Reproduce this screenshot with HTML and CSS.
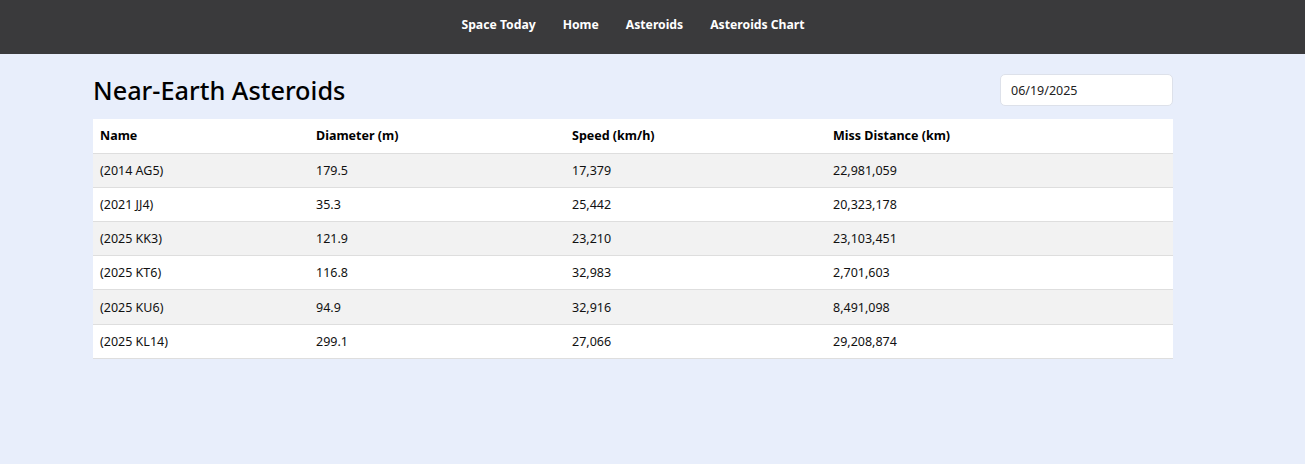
FILE: index.html
```html
<!DOCTYPE html>
<html>
<head>
<meta charset="utf-8">
<link rel="stylesheet" href="styles.css">
</head>
<body>
<nav class="topnav">
  <a href="#">Space Today</a>
  <a href="#">Home</a>
  <a href="#">Asteroids</a>
  <a href="#">Asteroids Chart</a>
</nav>
<main class="container">
  <div class="header">
    <h1>Near-Earth Asteroids</h1>
    <div class="date-input">06/19/2025</div>
  </div>
  <table class="ast-table">
    <thead>
      <tr><th class="c1">Name</th><th class="c2">Diameter (m)</th><th class="c3">Speed (km/h)</th><th class="c4">Miss Distance (km)</th></tr>
    </thead>
    <tbody>
      <tr><td>(2014 AG5)</td><td>179.5</td><td>17,379</td><td>22,981,059</td></tr>
      <tr><td>(2021 JJ4)</td><td>35.3</td><td>25,442</td><td>20,323,178</td></tr>
      <tr><td>(2025 KK3)</td><td>121.9</td><td>23,210</td><td>23,103,451</td></tr>
      <tr><td>(2025 KT6)</td><td>116.8</td><td>32,983</td><td>2,701,603</td></tr>
      <tr><td>(2025 KU6)</td><td>94.9</td><td>32,916</td><td>8,491,098</td></tr>
      <tr><td>(2025 KL14)</td><td>299.1</td><td>27,066</td><td>29,208,874</td></tr>
    </tbody>
  </table>
</main>
</body>
</html>
```

FILE: styles.css
```css
* { box-sizing: border-box; }
html, body { margin: 0; padding: 0; }
body {
  background: #e8eefb;
  font-family: "Noto Sans", "Open Sans", sans-serif;
  font-size: 12.5px;
  color: #111;
  height: 464px;
}
.topnav {
  background: #3a3a3c;
  height: 54px;
  display: flex;
  justify-content: center;
  align-items: flex-start;
  gap: 27px;
  padding-right: 39px;
  padding-top: 16px;
}
.topnav a {
  color: #fff;
  text-decoration: none;
  font-weight: 700;
  font-size: 12.2px;
}
.container {
  width: 1080px;
  margin-left: 93px;
}
.header {
  display: flex;
  justify-content: space-between;
  align-items: center;
  padding-top: 20px;
  margin-bottom: 13px;
}
.header h1 {
  margin: 0;
  font-size: 25.3px;
  line-height: 32px;
  font-weight: 500;
  color: #000;
}
.date-input {
  width: 173px;
  height: 32px;
  background: #fff;
  border: 1px solid #dde1ea;
  border-radius: 5px;
  padding: 0 10px;
  display: flex;
  align-items: center;
  font-size: 12.5px;
  color: #222;
}
.ast-table {
  width: 1080px;
  border-collapse: collapse;
  background: #fff;
}
.ast-table th, .ast-table td {
  text-align: left;
  padding: 0 7px;
  height: 34.2px;
  border-bottom: 1px solid #dedede;
}
.ast-table th { font-weight: 700; color: #000; }
.ast-table td { color: #111; }
.ast-table tbody tr:nth-child(odd) { background: #f2f2f2; }
.c1 { width: 216px; }
.c2 { width: 256px; }
.c3 { width: 261px; }
.c4 { width: 347px; }
```
